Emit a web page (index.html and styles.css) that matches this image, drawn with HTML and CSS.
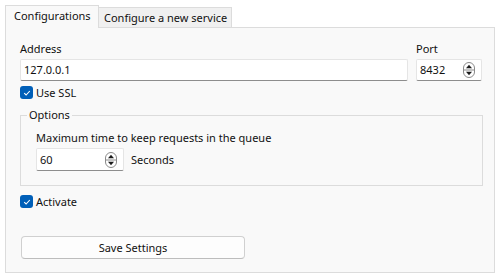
FILE: index.html
```html
<!DOCTYPE html>
<html lang="en">

<head>
    <meta charset="UTF-8">
    <title>Service Settings</title>
    <link rel="stylesheet" href="styles.css">
</head>

<body>
    <!-- Tab bar -->
    <div class="tabs">
        <div class="tab active">Configurations</div>
        <div class="tab">Configure a new service</div>
    </div>

    <div class="panel">
        <!-- Address / port -->
        <div class="addr-grid">
            <label class="field-label">Address</label>
            <label class="field-label">Port</label>
            <div class="line-edit">127.0.0.1</div>
            <div class="spin-box">
                <span class="spin-value">8432</span>
                <svg class="spin-arrows" width="12" height="16" viewBox="0 0 12 16">
                    <rect x="0.5" y="0.5" width="11" height="15" rx="5.5" fill="#fff" stroke="#8a8a8a"/>
                    <line x1="1" y1="8" x2="11" y2="8" stroke="#8a8a8a"/>
                    <path d="M3 6.2 L6 2.8 L9 6.2 Z" fill="#1b1b1b"/>
                    <path d="M3 9.8 L6 13.2 L9 9.8 Z" fill="#1b1b1b"/>
                </svg>
            </div>
        </div>

        <div class="check-row">
            <span class="check-box">
                <svg width="8" height="8" viewBox="0 0 8 8"><path d="M1.2 4.2 L3.1 6 L6.8 2" fill="none" stroke="#fff" stroke-width="1.1"/></svg>
            </span>
            <span>Use SSL</span>
        </div>

        <!-- Options group -->
        <fieldset class="group">
            <legend>Options</legend>
            <div class="group-text">Maximum time to keep requests in the queue</div>
            <div class="spin-row">
                <div class="spin-box wide">
                    <span class="spin-value">60</span>
                    <svg class="spin-arrows" width="12" height="16" viewBox="0 0 12 16">
                        <rect x="0.5" y="0.5" width="11" height="15" rx="5.5" fill="#fff" stroke="#8a8a8a"/>
                        <line x1="1" y1="8" x2="11" y2="8" stroke="#8a8a8a"/>
                        <path d="M3 6.2 L6 2.8 L9 6.2 Z" fill="#1b1b1b"/>
                        <path d="M3 9.8 L6 13.2 L9 9.8 Z" fill="#1b1b1b"/>
                    </svg>
                </div>
                <span class="unit">Seconds</span>
            </div>
        </fieldset>

        <div class="check-row activate">
            <span class="check-box">
                <svg width="8" height="8" viewBox="0 0 8 8"><path d="M1.2 4.2 L3.1 6 L6.8 2" fill="none" stroke="#fff" stroke-width="1.1"/></svg>
            </span>
            <span>Activate</span>
        </div>

        <button class="save-btn">Save Settings</button>
    </div>
</body>

</html>
```

FILE: styles.css
```css
/* General */
* {
    box-sizing: border-box;
}

body {
    margin: 0;
    background-color: #ffffff;
    font-family: "Noto Sans", "Open Sans", sans-serif;
    font-size: 11px;
    color: #111111;
}

/* Tabs */
.tabs {
    display: flex;
    align-items: flex-end;
    padding: 5px 0 0 5px;
    height: 27px;
}

.tab {
    height: 20px;
    padding: 0 4px 0 5px;
    line-height: 19px;
    background-color: #f0f0f0;
    border: 1px solid #dcdcdc;
    border-bottom: none;
    border-left: none;
}

.tab.active {
    width: 94px;
    height: 23px;
    line-height: 19px;
    padding: 0 0 0 8px;
    background-color: #f9f9f9;
    border-left: 1px solid #dcdcdc;
    position: relative;
    z-index: 1;
    margin-bottom: -1px;
}

/* Main panel */
.panel {
    margin: 0 4px 0 5px;
    height: 246px;
    background-color: #f9f9f9;
    border: 1px solid #dcdcdc;
    padding: 12px 12px 0 14px;
    display: flex;
    flex-direction: column;
}

.addr-grid {
    display: grid;
    grid-template-columns: 1fr 66px;
    column-gap: 8px;
    row-gap: 2px;
}

.field-label {
    line-height: 17px;
}

.line-edit,
.spin-box {
    height: 22px;
    line-height: 20px;
    background-color: #ffffff;
    border: 1px solid #e5e5e5;
    border-bottom-color: #8d8d8d;
    border-radius: 2px;
    padding: 0 3px;
}

.spin-box {
    display: flex;
    align-items: center;
    justify-content: space-between;
    padding: 0 6px 0 3px;
}

.spin-box.wide {
    width: 88px;
    height: 23px;
}

.spin-arrows {
    display: block;
}

/* Check boxes */
.check-row {
    display: flex;
    align-items: center;
    gap: 3px;
    margin-top: 5px;
    height: 13px;
    line-height: 13px;
}

.check-box {
    width: 13px;
    height: 13px;
    border-radius: 3px;
    background-color: #005fb8;
    display: flex;
    align-items: center;
    justify-content: center;
}

.check-box svg {
    display: block;
}

/* Group box */
.group {
    margin: 8px 0 0 0;
    padding: 7px 15px 14px 15px;
    border: 1px solid #dcdcdc;
    width: 463px;
}

.group legend {
    margin-left: -9px;
    padding: 0 2px;
    line-height: 16px;
}

.group-text {
    line-height: 16px;
}

.spin-row {
    display: flex;
    align-items: center;
    gap: 7px;
    margin-top: 2px;
}

.check-row.activate {
    margin-top: 9px;
}

/* Button */
.save-btn {
    margin-top: 28px;
    margin-left: 1px;
    width: 224px;
    height: 23px;
    font-family: inherit;
    font-size: 11px;
    color: #111111;
    background-color: #fdfdfd;
    border: 1px solid #d0d0d0;
    border-bottom-color: #bdbdbd;
    border-radius: 4px;
    padding: 0;
}
```
